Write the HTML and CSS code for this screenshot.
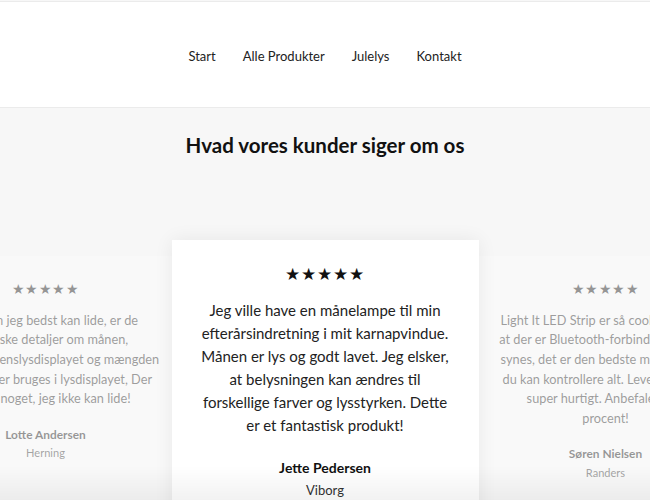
FILE: index.html
```html
<!DOCTYPE html>
<html lang="da">
<head>
<meta charset="utf-8">
<title>Hvad vores kunder siger om os</title>
<link rel="stylesheet" href="styles.css">
</head>
<body>
<header class="site-header">
  <nav class="main-nav">
    <a href="#">Start</a>
    <a href="#">Alle Produkter</a>
    <a href="#">Julelys</a>
    <a href="#">Kontakt</a>
  </nav>
</header>
<main class="reviews">
  <h2 class="reviews-title">Hvad vores kunder siger om os</h2>
  <div class="slider">
    <article class="review side">
      <div class="stars">★★★★★</div>
      <p class="quote">Det, som jeg bedst kan lide, er de<br>realistiske detaljer om månen,<br>regnbuefarvenslysdisplayet og mængden<br>af farver, der bruges i lysdisplayet, Der<br>er ikke noget, jeg ikke kan lide!</p>
      <div class="name">Lotte Andersen</div>
      <div class="city">Herning</div>
    </article>
    <article class="review active">
      <div class="stars">★★★★★</div>
      <p class="quote">Jeg ville have en månelampe til min<br>efterårsindretning i mit karnapvindue.<br>Månen er lys og godt lavet. Jeg elsker,<br>at belysningen kan ændres til<br>forskellige farver og lysstyrken. Dette<br>er et fantastisk produkt!</p>
      <div class="name">Jette Pedersen</div>
      <div class="city">Viborg</div>
    </article>
    <article class="review side">
      <div class="stars">★★★★★</div>
      <p class="quote">Light It LED Strip er så cool, jeg elsker<br>at der er Bluetooth-forbindelse, og jeg<br>synes, det er den bedste mulighed, da<br>du kan kontrollere alt. Leveringen var<br>super hurtigt. Anbefaler 100<br>procent!</p>
      <div class="name">Søren Nielsen</div>
      <div class="city">Randers</div>
    </article>
  </div>
</main>
<div class="bottom-fade"></div>
</body>
</html>
```

FILE: styles.css
```css
html, body {
  margin: 0;
  padding: 0;
  overflow: hidden;
  background: #f7f7f7;
  font-family: "Lato", "Liberation Sans", sans-serif;
  color: #222;
}

.site-header {
  background: #fff;
  margin-top: 1px;
  border-top: 1px solid #ebebeb;
  border-bottom: 1px solid #ebebeb;
  height: 105px;
  display: flex;
  align-items: center;
  justify-content: center;
}

.main-nav {
  display: flex;
  gap: 27px;
  margin-top: 2px;
}

.main-nav a {
  color: #222;
  text-decoration: none;
  font-size: 13px;
  line-height: 18px;
}

.reviews {
  padding-top: 24px;
  display: flex;
  flex-direction: column;
  align-items: center;
}

.reviews-title {
  margin: 0;
  font-size: 20.5px;
  line-height: 26px;
  font-weight: 700;
  color: #111;
}

.slider {
  width: 100%;
  display: flex;
  justify-content: center;
  align-items: flex-start;
  margin-top: 82px;
}

.review {
  flex: 0 0 307px;
  box-sizing: border-box;
  background: #fff;
  text-align: center;
  padding: 23px 10px 24px;
  box-shadow: 0 0 18px rgba(0, 0, 0, 0.07);
}

.review.active {
  position: relative;
  z-index: 2;
}

.review.side {
  transform: scale(0.85);
  transform-origin: center top;
  opacity: 0.42;
  margin-top: 16px;
  padding-top: 28px;
  padding-bottom: 70px;
  box-shadow: none;
  background: rgba(255, 255, 255, 0.8);
}

.review.side:first-child {
  margin-right: -27px;
}

.review.side:last-child {
  margin-left: -27px;
}

.stars {
  font-size: 17px;
  line-height: 22px;
  letter-spacing: 1px;
  color: #111;
}

.quote {
  margin: 14px 0 0;
  font-size: 15px;
  line-height: 23px;
  color: #222;
}

.name {
  margin-top: 22px;
  font-size: 14px;
  line-height: 18px;
  font-weight: 700;
  color: #111;
}

.city {
  margin-top: 4px;
  font-size: 13px;
  line-height: 18px;
  color: #333;
}

.bottom-fade {
  position: fixed;
  left: 0;
  right: 0;
  bottom: 0;
  height: 34px;
  pointer-events: none;
  z-index: 5;
  background: linear-gradient(to bottom, rgba(0, 0, 0, 0), rgba(0, 0, 0, 0.05));
}
```
